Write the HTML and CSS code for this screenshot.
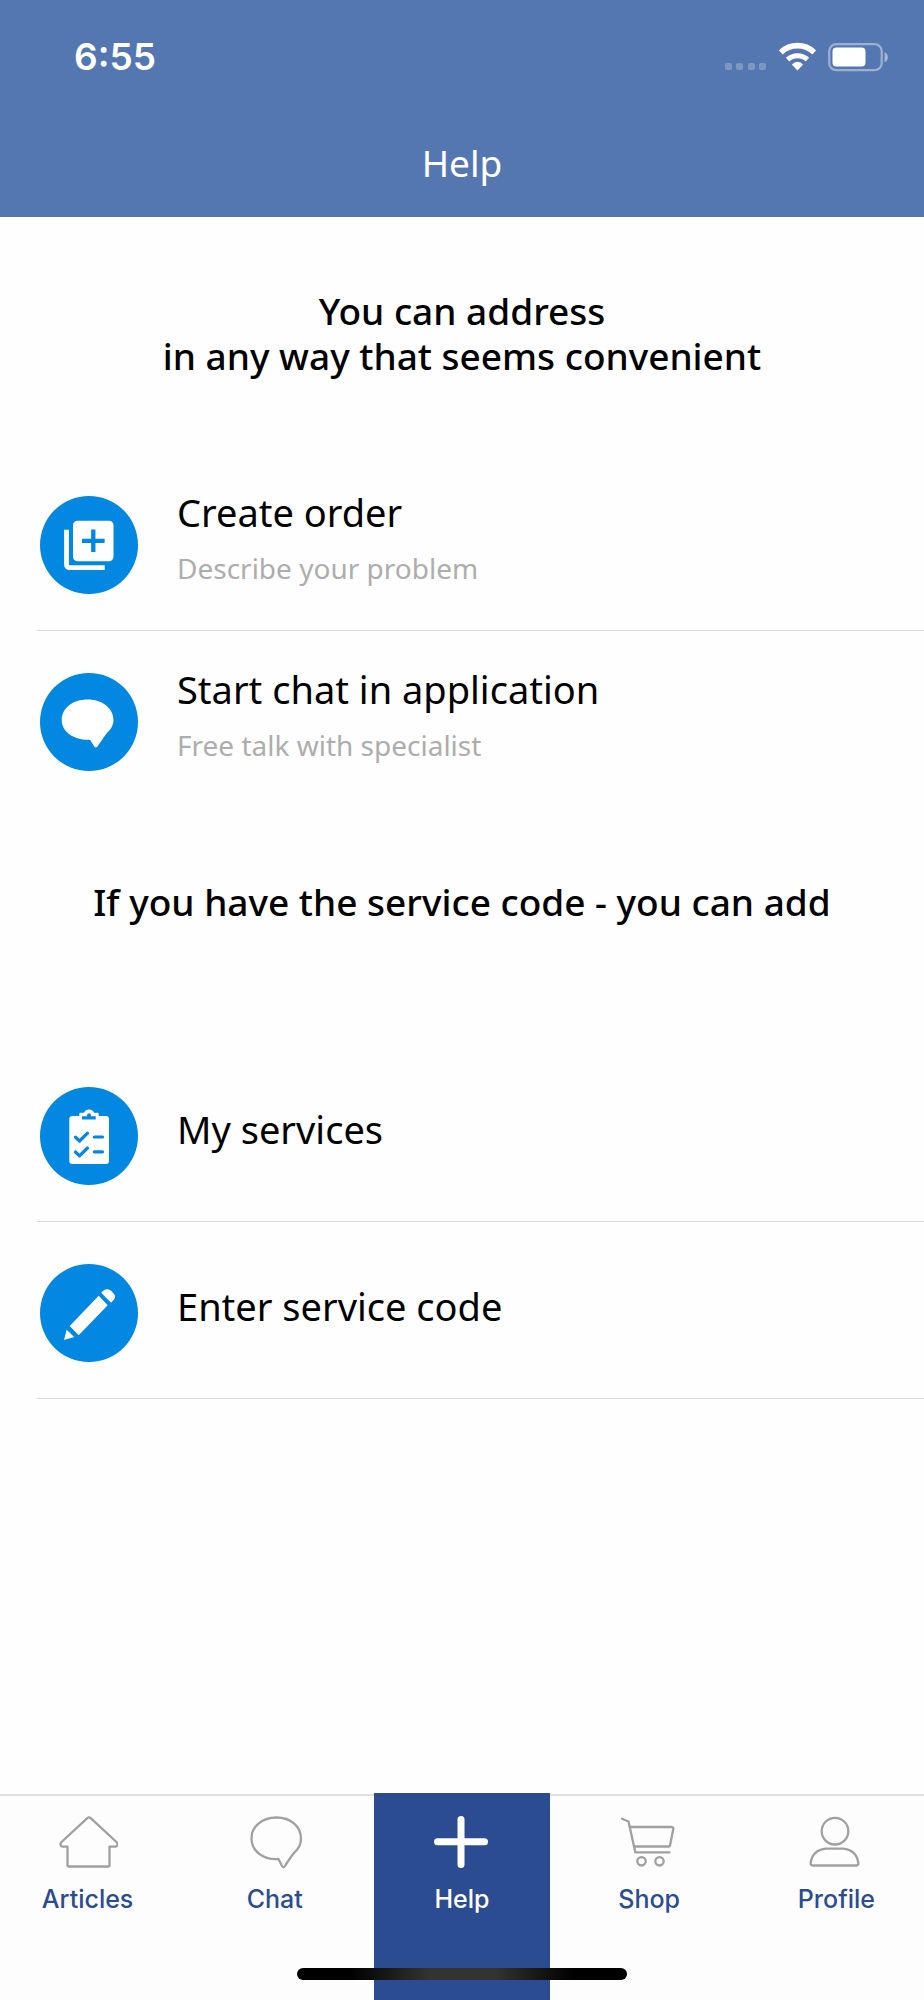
FILE: index.html
```html
<!DOCTYPE html>
<html lang="en">
<head>
<meta charset="utf-8">
<meta name="viewport" content="width=device-width, initial-scale=1">
<title>Help</title>
<link rel="stylesheet" href="styles.css">
</head>
<body>
<div class="app">
  <header class="header">
    <div class="status">
      <time class="clock">6:55</time>
      <div class="indicators">
        <svg width="43" height="30" viewBox="0 0 43 30" fill="#fff" fill-opacity=".24" aria-label="No signal"><rect x="1" y="21" width="7" height="7" rx="2"/><rect x="12" y="21" width="7" height="7" rx="2"/><rect x="24" y="21" width="7" height="7" rx="2"/><rect x="35" y="21" width="7" height="7" rx="2"/></svg>
        <svg width="37" height="30" viewBox="0 0 37 30" fill="none" stroke="#fff" aria-label="Wi-Fi"><path stroke-width="5.6" d="M1.8 10.4A24 24 0 0 1 35.2 10.4"/><path stroke-width="5" d="M8.6 17.6A14.5 14.5 0 0 1 28.4 17.6"/><path fill="#fff" stroke="none" d="M12.8 22.4Q18.500 17 24.200 22.400L18.500 28.400Z"/></svg>
        <svg width="61" height="30" viewBox="0 0 61 30" aria-label="Battery"><rect x="1.200" y="2.200" width="52.500" height="26" rx="7" fill="none" stroke="#fff" stroke-opacity=".42" stroke-width="2.200"/><rect x="4.500" y="5.500" width="33" height="19" rx="4" fill="#fff"/><path d="M56.500 10Q60 12 60 15.200T56.500 20.500Z" fill="#fff" fill-opacity=".45"/></svg>
      </div>
    </div>
    <h1 class="title">Help</h1>
  </header>

  <main class="content">
    <h2 class="intro">You can address<br>in any way that seems convenient</h2>
    <ul class="list">
      <li><a class="row" href="#order">
        <svg class="badge" viewBox="0 0 98 98" aria-hidden="true"><circle cx="49" cy="49" r="49"/><rect x="33" y="24.700" width="40.500" height="40.500" rx="4.500" fill="#fff"/><path d="M26.500 33.700V68Q26.500 71.700 30 71.700H64.700" fill="none" stroke="#fff" stroke-width="4.800"/><path class="cut" stroke-width="4.300" d="M53.300 33.500V56M42 44.800H64.600"/></svg>
        <span class="text"><span class="name">Create order</span><span class="note">Describe your problem</span></span>
      </a></li>
      <li><a class="row row-plain" href="#chat">
        <svg class="badge" viewBox="0 0 98 98" aria-hidden="true"><circle cx="49" cy="49" r="49"/><path fill="#fff" d="M47.500 26.500C62 26.500 73.500 35 73.500 47C73.500 52 71 56.300 67.300 59.500C64.500 63 60 70 57.500 73.500Q55.800 75.500 54.200 73.500L50 66.800C34 67.500 21.700 59 21.700 47C21.700 35 33 26.500 47.500 26.500Z"/></svg>
        <span class="text"><span class="name">Start chat in application</span><span class="note">Free talk with specialist</span></span>
      </a></li>
    </ul>

    <h2 class="intro">If you have the service code - you can add</h2>
    <ul class="list">
      <li><a class="row" href="#services">
        <svg class="badge" viewBox="0 0 98 98" aria-hidden="true"><circle cx="49" cy="49" r="49"/><rect x="29.300" y="29" width="39.700" height="48" rx="3" fill="#fff"/><path fill="#fff" d="M39.300 32V27Q39.300 25.700 40.600 25.700H44Q45.500 22.500 49 22.500T54 25.700H57.500Q58.700 25.700 58.700 27V32Z"/><path fill="#0288e0" d="M42 29.300H47Q47 26.300 49 26.300T51 29.300H55.700V32.500H42Z"/><path class="cut" stroke-width="3.200" stroke-linecap="round" stroke-linejoin="round" d="M35.500 50.200L39.500 54L47.500 46.200M54.300 50H62.500M35.500 65L39.500 68.800L47.500 61M54.300 64.800H62.500"/></svg>
        <span class="text"><span class="name">My services</span></span>
      </a></li>
      <li><a class="row" href="#code">
        <svg class="badge" viewBox="0 0 98 98" aria-hidden="true"><circle cx="49" cy="49" r="49"/><path fill="#fff" d="M58.700 31.700L67.700 41.300L38.700 71.300L29.700 62ZM26.700 65.700L34.200 73L24 76ZM61.300 28.700C64 25 68 24 71.300 27C75.500 31 76 33 74 35.500L71 38.700Z"/></svg>
        <span class="text"><span class="name">Enter service code</span></span>
      </a></li>
    </ul>
  </main>

  <nav class="tabs">
    <a class="tab" href="#articles"><svg class="icon" viewBox="0 0 60 56" aria-hidden="true"><path d="M29.300 4.200Q31 2.500 32.700 4.200L59 28.500Q60.500 32.500 57 32.700H51.500V51Q51.500 52.500 50 52.500H11Q9.500 52.500 9.500 51V32.700H5Q1.500 32.500 3 28.500Z"/></svg>Articles</a>
    <a class="tab" href="#chat"><svg class="icon" viewBox="0 0 60 56" aria-hidden="true"><path d="M31.500 3.500C45.500 3.500 56 12 56 25C56 30.500 53 35.500 48.500 39.500Q43 47 40 52Q38.500 54.500 37 52L33.500 45C18 46 6.500 37 6.500 24.500C6.500 12 17.500 3.500 31.500 3.500Z"/></svg>Chat</a>
    <a class="tab tab-active" href="#help" aria-current="page"><svg class="icon" viewBox="0 0 60 56" aria-hidden="true"><path d="M29 5.500V50.500M5.500 27.700H52.500"/></svg>Help</a>
    <a class="tab" href="#shop"><svg class="icon" viewBox="0 0 60 56" aria-hidden="true"><path d="M3 4.700L9.500 7.500L16.300 38.300H50.500M11 13H52.500Q54.700 13 54.300 15L51 31.500Q50.800 32.500 49.800 32.500H15.300"/><circle cx="22.500" cy="47.300" r="4.200"/><circle cx="40.500" cy="47.300" r="4.200"/></svg>Shop</a>
    <a class="tab" href="#profile"><svg class="icon" viewBox="0 0 60 56" aria-hidden="true"><circle cx="29" cy="17.200" r="13.300"/><path d="M20 34.700H37Q50.500 36 52.300 49Q52.500 51.500 50.500 51.500H6.500Q4.500 51.500 4.700 49Q6.500 36 20 34.700Z"/></svg>Profile</a>
    <span class="home-bar"></span>
  </nav>
</div>
</body>
</html>
```

FILE: styles.css
```css
* {
  box-sizing: border-box;
}

body {
  margin: 0;
  background: #fefefe;
  color: #000;
  font-family: "Noto Sans", sans-serif;
}

a {
  color: inherit;
  text-decoration: none;
}

.app {
  display: flex;
  flex-direction: column;
  min-height: 100vh;
}

.header {
  padding-bottom: 32px;
  background: #5577b1;
  color: #fff;
}

.status {
  display: flex;
  align-items: center;
  justify-content: space-between;
  height: 112px;
  padding: 2px 35px 0 74px;
  margin-bottom: 28px;
}

.clock {
  font: 600 37px/44px Inter, sans-serif;
}

.indicators {
  display: flex;
  gap: 12px;
}

.title {
  margin: 0;
  font-size: 37px;
  font-weight: 400;
  line-height: 45px;
  text-align: center;
}

.content {
  flex: 1;
}

.intro {
  min-height: 237px;
  margin: 0;
  padding: 71px 24px 0;
  font-size: 37px;
  font-weight: 500;
  line-height: 45px;
  text-align: center;
}

.list {
  margin: 0;
  padding: 0 0 0 37px;
  list-style: none;
}

.row {
  display: flex;
  align-items: center;
  gap: 39px;
  min-height: 177px;
  padding: 6px 24px 0 3px;
  border-bottom: 1px solid #d9d9d9;
}

.row-plain {
  border-color: transparent;
}

.badge {
  flex: none;
  width: 98px;
  height: 98px;
  fill: #0288e0;
}

.cut {
  fill: none;
  stroke: #0288e0;
}

.text {
  display: flex;
  flex-direction: column;
  gap: 15px;
  padding-bottom: 14px;
}

.name {
  font-size: 38px;
  line-height: 45px;
}

.note {
  color: #adadad;
  font-size: 28px;
  line-height: 36px;
}

.tabs {
  position: relative;
  display: grid;
  grid-template-columns: repeat(5, 1fr);
  gap: 12px;
  min-height: 207px;
  background: linear-gradient(#fefefe 1px, #dfdfdf 1px, #dfdfdf 3px, #fdfdfd 3px);
}

.tab {
  display: flex;
  flex-direction: column;
  align-items: center;
  gap: 14px;
  padding-top: 21px;
  color: #2c4c92;
  font: 500 25px/30px Inter, sans-serif;
}

.tab-active {
  background: #2c4c92;
  color: #fff;
}

.icon {
  width: 60px;
  height: 56px;
  fill: none;
  stroke: #a0a0a0;
  stroke-width: 2.3;
  stroke-linecap: round;
  stroke-linejoin: round;
}

.tab-active .icon {
  stroke: #fff;
  stroke-width: 7;
}

.home-bar {
  position: absolute;
  bottom: 20px;
  left: 50%;
  width: 330px;
  height: 12px;
  margin-left: -165px;
  border-radius: 6px;
  background: linear-gradient(90deg, #000 16%, #333 40%, #333 60%, #000 84%);
}
```
